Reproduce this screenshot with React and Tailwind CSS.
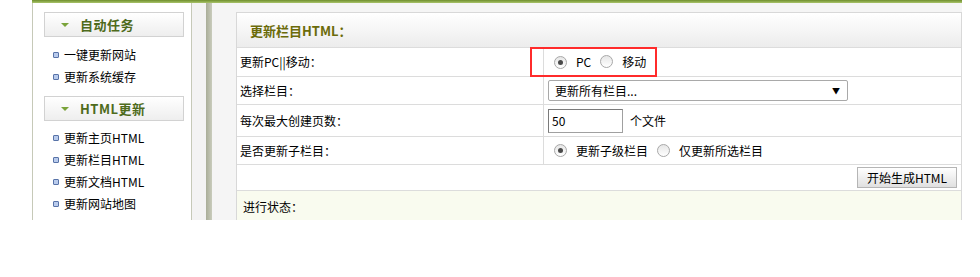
import React from 'react';

const font = { fontFamily: '"Noto Sans CJK SC", "Liberation Sans", sans-serif' };

const Radio = ({ checked }) => (
  <span className="inline-flex w-[13px] h-[13px] rounded-full border border-[#a8a8a8] bg-gradient-to-b from-[#e6e6e6] to-[#ffffff] items-center justify-center shrink-0">
    {checked && <span className="w-[5px] h-[5px] rounded-full bg-[#4a4a4a]" />}
  </span>
);

const SideHeader = ({ children }) => (
  <div className="h-[25px] w-[140px] border border-[#d2d2d2] bg-gradient-to-b from-white to-[#eeeeee] flex items-center">
    <span className="ml-[16px] w-0 h-0 border-l-[4px] border-r-[4px] border-t-[4px] border-l-transparent border-r-transparent border-t-[#7aa33a]" />
    <span className="ml-[11px] text-[13px] leading-none font-bold text-[#4e6b1c] tracking-[0.5px]">{children}</span>
  </div>
);

const SideItem = ({ children }) => (
  <li className="h-[22px] flex items-center text-[12px] leading-none text-black">
    <span className="w-[6px] h-[6px] rounded-[1px] border border-[#5873a8] bg-[#b9cbec] ml-[9px] mr-[5px]" />
    {children}
  </li>
);

const Row = ({ label, h, children }) => (
  <div className={`flex border-t border-[#dcdcdc] ${h}`}>
    <div className="w-[307px] border-r border-[#dcdcdc] pl-[3px] flex items-center text-[12px] leading-none">{label}</div>
    <div className="flex-1 pl-[4px] flex items-center text-[12px] leading-none">{children}</div>
  </div>
);

export default function App() {
  return (
    <div className="w-[980px] h-[277px] bg-white flex" style={font}>
      <div className="w-[32px]" />
      <div className="w-[930px] h-[220px] flex flex-col overflow-hidden">
        <div className="h-[3px] shrink-0 bg-gradient-to-b from-[#6f8f2c] to-[#a9c46a]" />
        <div className="flex flex-1 min-h-0">
          {/* sidebar */}
          <div className="w-[160px] border-l border-r border-[#c6c9b8] bg-white pl-[11px] pt-[9px]">
            <SideHeader>自动任务</SideHeader>
            <ul className="pt-[7px]">
              <SideItem>一键更新网站</SideItem>
              <SideItem>更新系统缓存</SideItem>
            </ul>
            <div className="mt-[8px]">
              <SideHeader>HTML更新</SideHeader>
            </div>
            <ul className="pt-[6px]">
              <SideItem>更新主页HTML</SideItem>
              <SideItem>更新栏目HTML</SideItem>
              <SideItem>更新文档HTML</SideItem>
              <SideItem>更新网站地图</SideItem>
              <SideItem>更新RSS文件</SideItem>
            </ul>
          </div>

          {/* splitter */}
          <div className="w-[14px] bg-[#f3f3f3]" />
          <div className="w-[6px] bg-gradient-to-r from-[#a9ad98] to-[#c9ccbc]" />
          <div className="w-[24px] bg-[#f5f5f5]" />

          {/* main */}
          <div className="w-[726px] bg-[#f5f5f5] pt-[9px]">
            <div className="relative border border-[#d8d8d8] bg-white">
              <div className="h-[34px] bg-gradient-to-b from-white to-[#ececec] flex items-center pl-[13px]">
                <span className="text-[13px] leading-none font-bold text-[#6b6b0a]">更新栏目HTML：</span>
              </div>
              <Row label="更新PC||移动：" h="h-[29px]">
                <div className="flex items-center ml-[6px]">
                  <Radio checked />
                  <span className="ml-[9px]">PC</span>
                  <span className="ml-[9px]"><Radio /></span>
                  <span className="ml-[9px]">移动</span>
                </div>
              </Row>
              <Row label="选择栏目：" h="h-[28px]">
                <div className="w-[300px] h-[21px] border border-[#a9a9a9] rounded-[2px] bg-white flex items-center justify-between pl-[6px] pr-[7px]">
                  <span>更新所有栏目...</span>
                  <span className="text-[8px]">▼</span>
                </div>
              </Row>
              <Row label="每次最大创建页数：" h="h-[32px]">
                <div className="w-[75px] h-[24px] border border-[#a0a0a0] border-t-[#7a7a7a] border-l-[#7a7a7a] bg-white flex items-center pl-[3px]">50</div>
                <span className="ml-[7px]">个文件</span>
              </Row>
              <Row label="是否更新子栏目：" h="h-[28px]">
                <div className="flex items-center ml-[6px]">
                  <Radio checked />
                  <span className="ml-[9px]">更新子级栏目</span>
                  <span className="ml-[9px]"><Radio /></span>
                  <span className="ml-[9px]">仅更新所选栏目</span>
                </div>
              </Row>
              <div className="h-[26px] border-t border-[#dcdcdc] flex items-center justify-end pr-[4px]">
                <button className="w-[100px] h-[21px] border border-[#b5b5b5] bg-gradient-to-b from-white to-[#e0e0e0] text-[12px] leading-none text-black">开始生成HTML</button>
              </div>
              <div className="h-[40px] border-t border-[#dcdcdc] bg-[#f9fbef] pl-[6px] pt-[10px] text-[12px] leading-none">进行状态：</div>

              {/* red annotation */}
              <div className="absolute left-[293px] top-[34px] w-[127px] h-[30px] border-2 border-[#ff2b2b] pointer-events-none" />
            </div>
          </div>
        </div>
      </div>
    </div>
  );
}
